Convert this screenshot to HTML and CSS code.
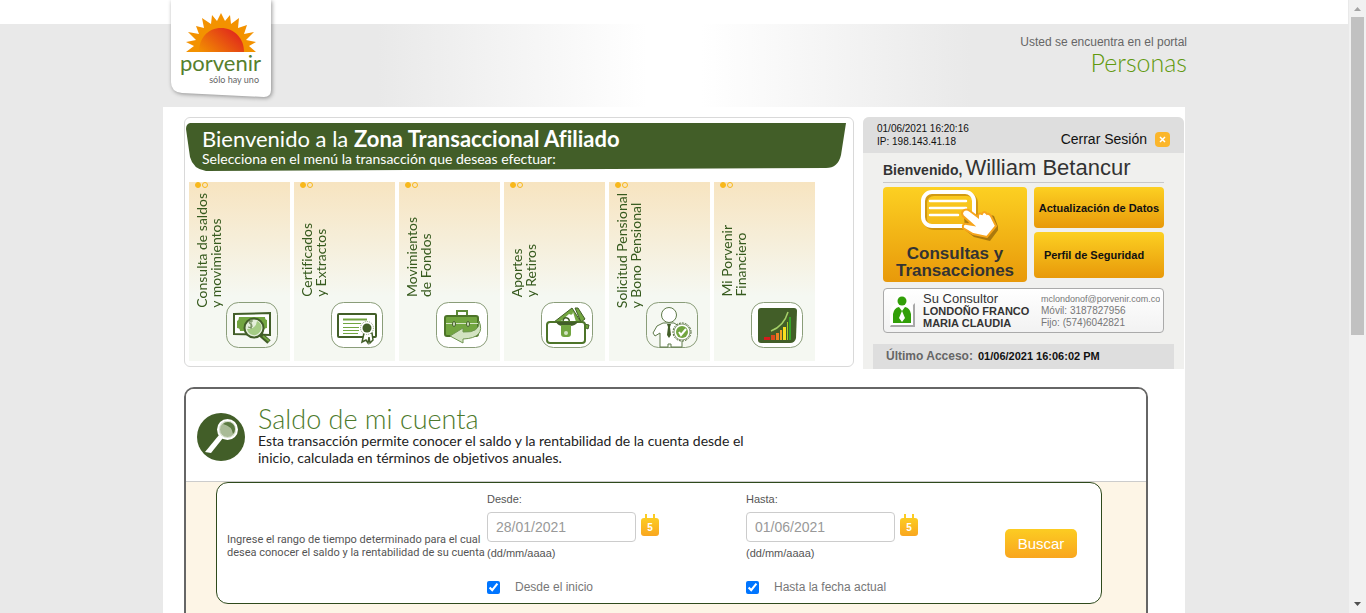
FILE: index.html
```html
<!DOCTYPE html>
<html lang="es">
<head>
<meta charset="utf-8">
<title>Porvenir - Zona Transaccional Afiliado</title>
<link rel="stylesheet" href="styles.css">
</head>
<body>
<div class="page">
  <header class="header">
    <div class="header-inner">
      <a class="logo" href="#" aria-label="Porvenir, sólo hay uno">
        <svg class="logo-tab" width="108" height="104" viewBox="0 0 108 104" aria-hidden="true">
          <path d="M1 0H101V90Q101 97 94 97L12 93Q1 92 1 82Z" fill="#fff"/>
          <defs>
            <linearGradient id="sun" x1="0" y1="1" x2="1" y2="0.4"><stop offset="0" stop-color="#f39200"/><stop offset="1" stop-color="#e0281c"/></linearGradient>
          </defs>
          <path d="M16 52L24 46L16 42L26 40L18 32L29 34L26 26L34 28L32 18L41 24L42 15L47 21L51 13L55 21L60 15L61 24L69 18L68 28L77 25L74 34L84 32L76 40L86 42L79 46L86 52Z" fill="#f39200"/>
          <path d="M29 52C29 38 38 28 51 28S74 38 74 52Z" fill="url(#sun)"/>
        </svg>
        <span class="logo-name">porvenir</span>
        <span class="logo-claim">sólo hay uno</span>
      </a>
      <div class="portal">
        <p class="portal-note">Usted se encuentra en el portal</p>
        <p class="portal-name">Personas</p>
      </div>
    </div>
  </header>

  <main class="container">
    <div class="top">
      <nav class="menu" aria-label="Zona transaccional">
        <div class="banner">
          <svg class="banner-shape" viewBox="0 0 660 48" preserveAspectRatio="none" aria-hidden="true"><path d="M4 0H660L655 32Q652 45 640 45L20 48Q7 46 4 34L0 6Q0 1 4 0Z" fill="#425e28"/></svg>
          <h1 class="banner-title">Bienvenido a la <strong>Zona Transaccional Afiliado</strong></h1>
          <p class="banner-sub">Selecciona en el menú la transacción que deseas efectuar:</p>
        </div>
        <div class="cards">
          <a class="card" href="#">
            <span class="dots"><i></i><i></i></span>
            <span class="card-label card-label-long">Consulta de saldos<br>y movimientos</span>
            <svg class="card-icon" viewBox="0 0 52 46" aria-hidden="true"><rect x=".5" y=".5" width="51" height="45" rx="12" fill="#f5f8f2" stroke="#8a9d79"/><path d="M8 12L44 11V33L8 32Z" fill="#fff" stroke="#425e28" stroke-width="2"/><path d="M13 15H39Q39 18 41 18V26Q38 26 38 29H14Q14 26 11 26V19Q13 18 13 15Z" fill="#72a540"/><circle cx="28" cy="26" r="9.500" fill="#e4eedb" stroke="#425e28" stroke-width="2"/><path d="M21 27Q30 27 31 19Q37 22 35 28Q32 34 27 33Q22 32 21 27Z" fill="#a5cc85"/><path d="M27 19Q23 18 23 21Q27 22 26 25Q24 26 22 25M25 17V27" fill="none" stroke="#6f8a58"/><path d="M34 32L43 40" stroke="#425e28" stroke-width="5"/><path d="M37 34L43 39" stroke="#72a540" stroke-width="2"/></svg>
          </a>
          <a class="card" href="#">
            <span class="dots"><i></i><i></i></span>
            <span class="card-label">Certificados<br>y Extractos</span>
            <svg class="card-icon" viewBox="0 0 52 46" aria-hidden="true"><rect x=".5" y=".5" width="51" height="45" rx="12" fill="#fff" stroke="#8a9d79"/><rect x="7" y="12" width="38" height="23" rx="1" fill="#fff" stroke="#425e28" stroke-width="2"/><path d="M12 17.500H36" stroke="#72a540" stroke-width="2"/><path d="M12 21.500H30M12 25.500H28M12 28.500H28M12 31.500H27" stroke="#72a540"/><path d="M33 31L31 40L35 38L37 41L38 35L39 41L42 38L41 31Z" fill="#fff" stroke="#425e28" stroke-width="1.500"/><circle cx="36" cy="26" r="6.500" fill="#fff" stroke="#8a9d79" stroke-dasharray="1 1"/><circle cx="36" cy="26" r="4.500" fill="#425e28"/></svg>
          </a>
          <a class="card" href="#">
            <span class="dots"><i></i><i></i></span>
            <span class="card-label">Movimientos<br>de Fondos</span>
            <svg class="card-icon" viewBox="0 0 52 46" aria-hidden="true"><rect x=".5" y=".5" width="51" height="45" rx="12" fill="#fff" stroke="#8a9d79"/><path d="M21 15V9H31V15" fill="none" stroke="#5d8a38" stroke-width="2"/><rect x="9" y="14" width="33" height="20" rx="2" fill="#72a540" stroke="#4d7429" stroke-width="2"/><path d="M10 21.500H42" stroke="#d3e3c2"/><ellipse cx="18" cy="22" rx="1.500" ry="2.500" fill="#d3e3c2" stroke="#425e28"/><ellipse cx="32" cy="22" rx="1.500" ry="2.500" fill="#d3e3c2" stroke="#425e28"/><path d="M14 34L27 26V30Q44 31 43 19Q50 36 27 37V41Z" fill="#d3e3c2" stroke="#6f9550"/></svg>
          </a>
          <a class="card" href="#">
            <span class="dots"><i></i><i></i></span>
            <span class="card-label">Aportes<br>y Retiros</span>
            <svg class="card-icon" viewBox="0 0 52 46" aria-hidden="true"><rect x=".5" y=".5" width="51" height="45" rx="12" fill="#fff" stroke="#8a9d79"/><path d="M34 6L37 6L44 17L40 20Z" fill="#72a540" stroke="#425e28"/><path d="M13 20L31 6L40 20Z" fill="#72a540" stroke="#425e28"/><path d="M19 20L28 12Q32 14 32 10L35 20Z" fill="#fff"/><path d="M22 20Q22 15 26 16Q29 17 28 20" fill="none" stroke="#425e28" stroke-width="1.500"/><path d="M43 22L48 23L47 27L43 25Z" fill="#72a540" stroke="#425e28"/><rect x="6" y="20" width="38" height="21" rx="3" fill="#fff" stroke="#4d7429" stroke-width="2"/><path d="M15 20H37Q34 24 29 24H22Q17 24 15 20Z" fill="#425e28"/><path d="M20 23H30V32Q30 35 27 35H23Q20 35 20 32Z" fill="#72a540"/><circle cx="25" cy="31" r="2" fill="#d3e3c2"/></svg>
          </a>
          <a class="card" href="#">
            <span class="dots"><i></i><i></i></span>
            <span class="card-label card-label-long">Solicitud Pensional<br>y Bono Pensional</span>
            <svg class="card-icon" viewBox="0 0 52 46" aria-hidden="true"><rect x=".5" y=".5" width="51" height="45" rx="12" fill="#f5f8f2" stroke="#8a9d79"/><g fill="#fff" stroke="#5f7a4a"><path d="M17 21H28L36 26V45H25V42H22V45H14V31L9 34L7 31L11 24Z"/><circle cx="23" cy="13" r="7.500"/></g><path d="M21 22H25L24 25L25 33L23 36L21 33L22 25Z" fill="#425e28"/><circle cx="36" cy="30" r="9" fill="#fff" stroke="#425e28" stroke-dasharray="2 1"/><circle cx="36" cy="30" r="8" fill="none" stroke="#8a9d79"/><circle cx="36" cy="30" r="6" fill="#72a540"/><path d="M33 30L35 33L40 27" fill="none" stroke="#fff" stroke-width="2"/></svg>
          </a>
          <a class="card" href="#">
            <span class="dots"><i></i><i></i></span>
            <span class="card-label">Mi Porvenir<br>Financiero</span>
            <svg class="card-icon" viewBox="0 0 52 46" aria-hidden="true"><rect x=".5" y=".5" width="51" height="45" rx="12" fill="#fff" stroke="#8a9d79"/><path d="M10 6H43Q46 6 46 9L45 36Q44 41 39 41H10Q7 41 7 38V9Q7 6 10 6Z" fill="#425e28"/><path d="M13 35H19V38H13Z" fill="#d41c1c"/><path d="M20 33H24V38H20Z" fill="#dc4a1c"/><path d="M25 31H28V38H25Z" fill="#ee8022"/><path d="M29 28H31V38H29Z" fill="#f5a522"/><path d="M32 25H35V38H32Z" fill="#f8e020"/><path d="M36 20H37V38H36Z" fill="#a5cc30"/><path d="M38 15H40V38H38Z" fill="#35a528"/><path d="M20 29Q33 24 37 10" fill="none" stroke="#a5d068" stroke-width="1.500"/></svg>
          </a>
        </div>
      </nav>

      <aside class="user">
        <div class="user-bar">
          <p class="session">01/06/2021 16:20:16<br>IP: 198.143.41.18</p>
          <a class="logout" href="#">Cerrar Sesión
            <svg width="16" height="16" viewBox="0 0 16 16" aria-hidden="true"><rect x="1" y="1" width="15" height="15" rx="4" fill="#fbb62b"/><path d="M6 6L11 11M11 6L6 11" stroke="#fff" stroke-width="1.500"/></svg>
          </a>
        </div>
        <div class="user-body">
          <p class="welcome"><strong>Bienvenido,</strong> <span>William Betancur</span></p>
          <div class="actions">
            <button class="action action-main" type="button">
              <svg width="86" height="54" viewBox="0 0 86 54" aria-hidden="true"><rect x="13" y="6" width="51" height="34" rx="9" fill="none" stroke="#b87a0c" stroke-opacity=".6" stroke-width="4"/><rect x="11" y="4" width="51" height="34" rx="9" fill="none" stroke="#fff" stroke-width="4"/><path d="M18 13H54M18 20H54M18 27H46" stroke="#fff" stroke-width="2.500" stroke-linecap="round"/><path d="M52 27L67 31L74 25L82 28L87 41L78 53L62 49L53 42Z" fill="#7a5008" opacity=".6"/><path d="M51 23Q54 20 58 23L66 29Q66 24 70 26Q72 22 75 26Q78 25 80 30L84 38L75 49L61 46L51 40Q50 35 55 36L61 37L51 28Q49 25 51 23Z" fill="#fff" stroke="#f7a51c" stroke-width="2"/></svg>
              <span>Consultas y<br>Transacciones</span>
            </button>
            <div class="action-side">
              <button class="action action-top" type="button">Actualización de Datos</button>
              <button class="action action-bottom" type="button">Perfil de Seguridad</button>
            </div>
          </div>
          <div class="advisor">
            <svg width="28" height="36" viewBox="0 0 28 36" aria-hidden="true"><path d="M3 32H25V12L27 10V34H2Z" fill="#888" opacity=".7"/><path d="M14 1Q21 1 21 8Q25 12 25 19V32H2V20Q3 13 7 11Q6 1 14 1Z" fill="#fff"/><circle cx="14" cy="8" r="4.500" fill="#319f08"/><path d="M5 30V21Q6 15 11 14L14 18L17 14Q22 15 23 21V30Z" fill="#319f08"/><path d="M14 18L17 25L14 29L11 25Z" fill="#fff"/></svg>
            <p class="advisor-name"><span>Su Consultor</span><strong>LONDOÑO FRANCO</strong><strong>MARIA CLAUDIA</strong></p>
            <p class="advisor-contact"><a href="#">mclondonof@porvenir.com.co</a><span>Móvil: 3187827956</span><span>Fijo: (574)6042821</span></p>
          </div>
        </div>
        <p class="last"><span>Último Acceso:</span> <strong>01/06/2021 16:06:02 PM</strong></p>
      </aside>
    </div>

    <section class="balance">
      <div class="balance-head">
        <svg class="balance-icon" viewBox="0 0 48 48" aria-hidden="true"><circle cx="24" cy="24" r="24" fill="#425e28"/><path d="M8 39L22 22L26 25L14 40Z" fill="#fff"/><circle cx="30.500" cy="16.500" r="9.500" fill="#a9bb96" stroke="#fff" stroke-width="2"/><circle cx="30.500" cy="16.500" r="8" fill="none" stroke="#fff" stroke-opacity=".6"/><path d="M26 11A7 7 0 0 1 36 21Q35 13 26 11Z" fill="#5c7a42"/></svg>
        <div>
          <h2 class="balance-title">Saldo de mi cuenta</h2>
          <p class="balance-text">Esta transacción permite conocer el saldo y la rentabilidad de la cuenta desde el inicio, calculada en términos de objetivos anuales.</p>
        </div>
      </div>
      <div class="balance-body">
        <form class="filter">
          <p class="filter-help">Ingrese el rango de tiempo determinado para el cual<br>desea conocer el saldo y la rentabilidad de su cuenta</p>
          <div class="field">
            <label for="from">Desde:</label>
            <div class="field-row">
              <input class="date" id="from" type="text" value="28/01/2021">
              <button class="calendar" type="button" aria-label="Elegir fecha inicial"><svg width="18" height="22" viewBox="0 0 18 22" aria-hidden="true"><path d="M4 0H6V5H4ZM12 0H14V5H12Z" fill="#fccc22"/><rect y="4" width="18" height="18" rx="3" fill="url(#cal)"/><defs><linearGradient id="cal" x2="0" y2="1"><stop stop-color="#fccc22"/><stop offset="1" stop-color="#f9a61f"/></linearGradient></defs><text class="calendar-day" x="9" y="17">5</text></svg></button>
            </div>
            <span class="hint">(dd/mm/aaaa)</span>
            <label class="check"><input type="checkbox" checked>Desde el inicio</label>
          </div>
          <div class="field">
            <label for="to">Hasta:</label>
            <div class="field-row">
              <input class="date" id="to" type="text" value="01/06/2021">
              <button class="calendar" type="button" aria-label="Elegir fecha final"><svg width="18" height="22" viewBox="0 0 18 22" aria-hidden="true"><path d="M4 0H6V5H4ZM12 0H14V5H12Z" fill="#fccc22"/><rect y="4" width="18" height="18" rx="3" fill="url(#cal)"/><text class="calendar-day" x="9" y="17">5</text></svg></button>
            </div>
            <span class="hint">(dd/mm/aaaa)</span>
            <label class="check"><input type="checkbox" checked>Hasta la fecha actual</label>
          </div>
          <button class="search" type="submit">Buscar</button>
        </form>
      </div>
    </section>
  </main>
</div>
<div class="scrollbar" aria-hidden="true">
  <svg width="17" height="17" viewBox="0 0 17 17"><path d="M5 11L8.500 7L12 11Z" fill="#a3a3a3"/></svg>
  <div class="track"><div class="thumb"></div></div>
  <svg width="17" height="17" viewBox="0 0 17 17"><path d="M5 6L8.500 10L12 6Z" fill="#505050"/></svg>
</div>
</body>
</html>
```
FILE: styles.css
```css
* { box-sizing: border-box; }

body {
  margin: 0;
  display: flex;
  height: 100vh;
  overflow: hidden;
  font-family: "Liberation Sans", Arial, sans-serif;
  font-size: 11px;
  font-variant-ligatures: none;
  color: #555;
  background: #e9e9e9;
}

h1, h2, p { margin: 0; font-weight: normal; }
a { color: inherit; text-decoration: none; }
button { font-family: inherit; border: 0; padding: 0; cursor: pointer; }
svg { display: block; flex: none; }

.page { flex: 1; min-width: 0; padding-right: 1px; overflow: hidden; }

.header {
  border-top: 24px solid #fff;
  background: linear-gradient(90deg, #e9e9e9 28%, #fff 48%, #fff 52%, #e9e9e9 72%);
}
.header-inner {
  max-width: 1022px;
  min-height: 83px;
  margin: 0 auto;
  padding-left: 7px;
  display: flex;
  justify-content: space-between;
  align-items: flex-start;
}
.logo {
  position: relative;
  width: 108px;
  margin-top: -24px;
  padding: 50px 19px 0 10px;
  display: flex;
  flex-direction: column;
  font-family: Lato, sans-serif;
}
.logo-tab { position: absolute; left: 0; top: 0; overflow: visible; filter: drop-shadow(1px 1px 2px rgba(0, 0, 0, .4)); }
.logo-name { position: relative; font-size: 22px; line-height: 26px; color: #56802d; }
.logo-claim { position: relative; align-self: flex-end; font-size: 9px; line-height: 8px; color: #666; white-space: nowrap; }
.portal { padding-top: 10px; margin-right: -2px; text-align: right; }
.portal-note { font-size: 12px; line-height: 16px; color: #666; }
.portal-name { font-family: Lato, sans-serif; font-weight: 300; font-size: 25px; line-height: 24px; color: #62990f; }

.container {
  max-width: 1022px;
  margin: 0 auto;
  padding: 10px 1px 60px 21px;
  background: #fff;
}
.top { display: flex; align-items: flex-start; gap: 9px; }

.menu {
  flex: 1;
  padding: 5px 1px;
  border: 1px solid #d9d9d9;
  border-radius: 6px;
}
.banner {
  position: relative;
  margin-right: 6px;
  height: 48px;
  padding: 4px 16px;
  font-family: Lato, sans-serif;
  color: #fff;
}
.banner-shape { position: absolute; left: 0; top: 0; width: 100%; height: 100%; }
.banner-title { position: relative; font-size: 22px; line-height: 24px; }
.banner-sub { position: relative; font-size: 14px; line-height: 16px; }

.cards { display: flex; gap: 4px; padding: 11px 0 0 3px; }
.card {
  position: relative;
  width: 101px;
  height: 179px;
  padding: 0 12px 13px 6px;
  display: flex;
  align-items: flex-end;
  gap: 3px;
  background: linear-gradient(#f7e4c0, #f5f8f2 64%);
  font-family: Lato, sans-serif;
  color: #365a1e;
}
.dots { position: absolute; left: 6px; top: 0; display: flex; gap: 1px; }
.dots i { width: 6px; height: 6px; border: 1px solid #f8b81c; border-radius: 50%; }
.dots i:first-child { background: #f8b81c; }
.card-label {
  writing-mode: vertical-rl;
  transform: rotate(180deg);
  width: 28px;
  margin-bottom: 51px;
  font-size: 14px;
  line-height: 14px;
  white-space: nowrap;
}
.card-label-long { margin-bottom: 40px; }
.card-icon { width: 52px; height: 46px; }

.user {
  width: 321px;
  min-height: 252px;
  display: flex;
  flex-direction: column;
  background: #f0f0ee;
  border-radius: 6px 6px 0 0;
  overflow: hidden;
}
.user-bar {
  display: flex;
  justify-content: space-between;
  align-items: center;
  height: 36px;
  padding: 0 14px;
  background: #dedede;
  color: #111;
}
.session { font-size: 10px; line-height: 13px; }
.logout { display: flex; align-items: center; gap: 7px; padding-top: 7px; font-size: 14px; }
.user-body { padding: 0 20px; }
.welcome { padding-top: 4px; border-bottom: 1px solid #c8c8c8; line-height: 21px; color: #333; }
.welcome strong { font-size: 14px; }
.welcome span { font-size: 22px; }
.actions { display: flex; gap: 7px; margin-top: 4px; }
.action {
  border-radius: 4px;
  background: linear-gradient(#fcd022, #e8990a);
  font-size: 11px;
  font-weight: bold;
  color: #111;
}
.action-main {
  flex: 1;
  height: 95px;
  display: flex;
  flex-direction: column;
  align-items: center;
  justify-content: flex-end;
  gap: 3px;
  padding-bottom: 3px;
  font-size: 17px;
  line-height: 17px;
  color: #333;
}
.action-side { width: 130px; display: flex; flex-direction: column; gap: 4px; }
.action-top { height: 41px; }
.action-bottom { height: 46px; padding-right: 10px; }
.advisor {
  display: flex;
  align-items: center;
  height: 45px;
  margin-top: 6px;
  padding: 0 3px 0 4px;
  border: 1px solid #aaa;
  border-radius: 4px;
  background: linear-gradient(#fff, #f2f2f2);
}
.advisor-name { width: 125px; padding-left: 7px; display: flex; flex-direction: column; line-height: 12px; color: #333; white-space: nowrap; }
.advisor-name span { font-size: 13px; }
.advisor-name strong { font-size: 11px; }
.advisor-contact { flex: 1; min-width: 0; overflow: hidden; display: flex; flex-direction: column; font-size: 10px; line-height: 12px; color: #777; }
.advisor-contact a { font-size: 9px; }
.last {
  margin: auto 10px 0;
  padding: 0 13px;
  background: #dedede;
  line-height: 25px;
  color: #111;
}
.last span { margin-right: 2px; font-size: 12px; font-weight: bold; color: #666; }

.balance {
  margin: 18px 36px 0 0;
  border: 2px solid #666;
  border-radius: 10px;
  background: #fdf5e6;
  overflow: hidden;
}
.balance-head {
  display: flex;
  gap: 13px;
  min-height: 93px;
  padding: 16px 11px 15px;
  border-bottom: 1px solid #ccc;
  background: #fff;
  font-family: Lato, sans-serif;
}
.balance-icon { width: 48px; height: 48px; margin-top: 8px; }
.balance-title { font-weight: 300; font-size: 27px; line-height: 27px; color: #4d7a2c; }
.balance-text { max-width: 510px; font-size: 14px; line-height: 17px; color: #222; }
.balance-body { padding: 0 44px 100px 30px; }
.filter {
  display: grid;
  grid-template-columns: 251px 250px 250px 72px;
  column-gap: 9px;
  align-items: center;
  height: 122px;
  padding: 0 10px;
  border: 1px solid #2f4a1c;
  border-radius: 12px;
  background: #fff;
}
.filter-help { padding-top: 6px; font-family: Roboto, sans-serif; line-height: 13px; white-space: nowrap; }
.field { display: flex; flex-direction: column; align-items: flex-start; line-height: 13px; }
.field-row { display: flex; align-items: flex-start; gap: 5px; margin: 6px 0 5px; }
.date {
  width: 149px;
  height: 30px;
  padding: 0 8px;
  border: 1px solid #ccc;
  border-radius: 4px;
  font-family: inherit;
  font-size: 14px;
  color: #999;
}
.calendar { margin-top: 2px; background: none; }
.calendar-day { font-size: 10px; font-weight: bold; fill: #fff; text-anchor: middle; }
.check { display: flex; align-items: center; gap: 15px; margin-top: 21px; font-size: 12px; color: #777; }
.check input { width: 13px; height: 13px; margin: 0; accent-color: #0075ff; }
.search {
  height: 29px;
  border-radius: 5px;
  background: linear-gradient(#fccc22, #f9a61f);
  font-size: 15px;
  color: #fff;
}

.scrollbar { width: 17px; display: flex; flex-direction: column; background: #f1f1f1; }
.track { flex: 1; padding: 0 2px; }
.thumb { height: 55%; background: #c1c1c1; }
```
